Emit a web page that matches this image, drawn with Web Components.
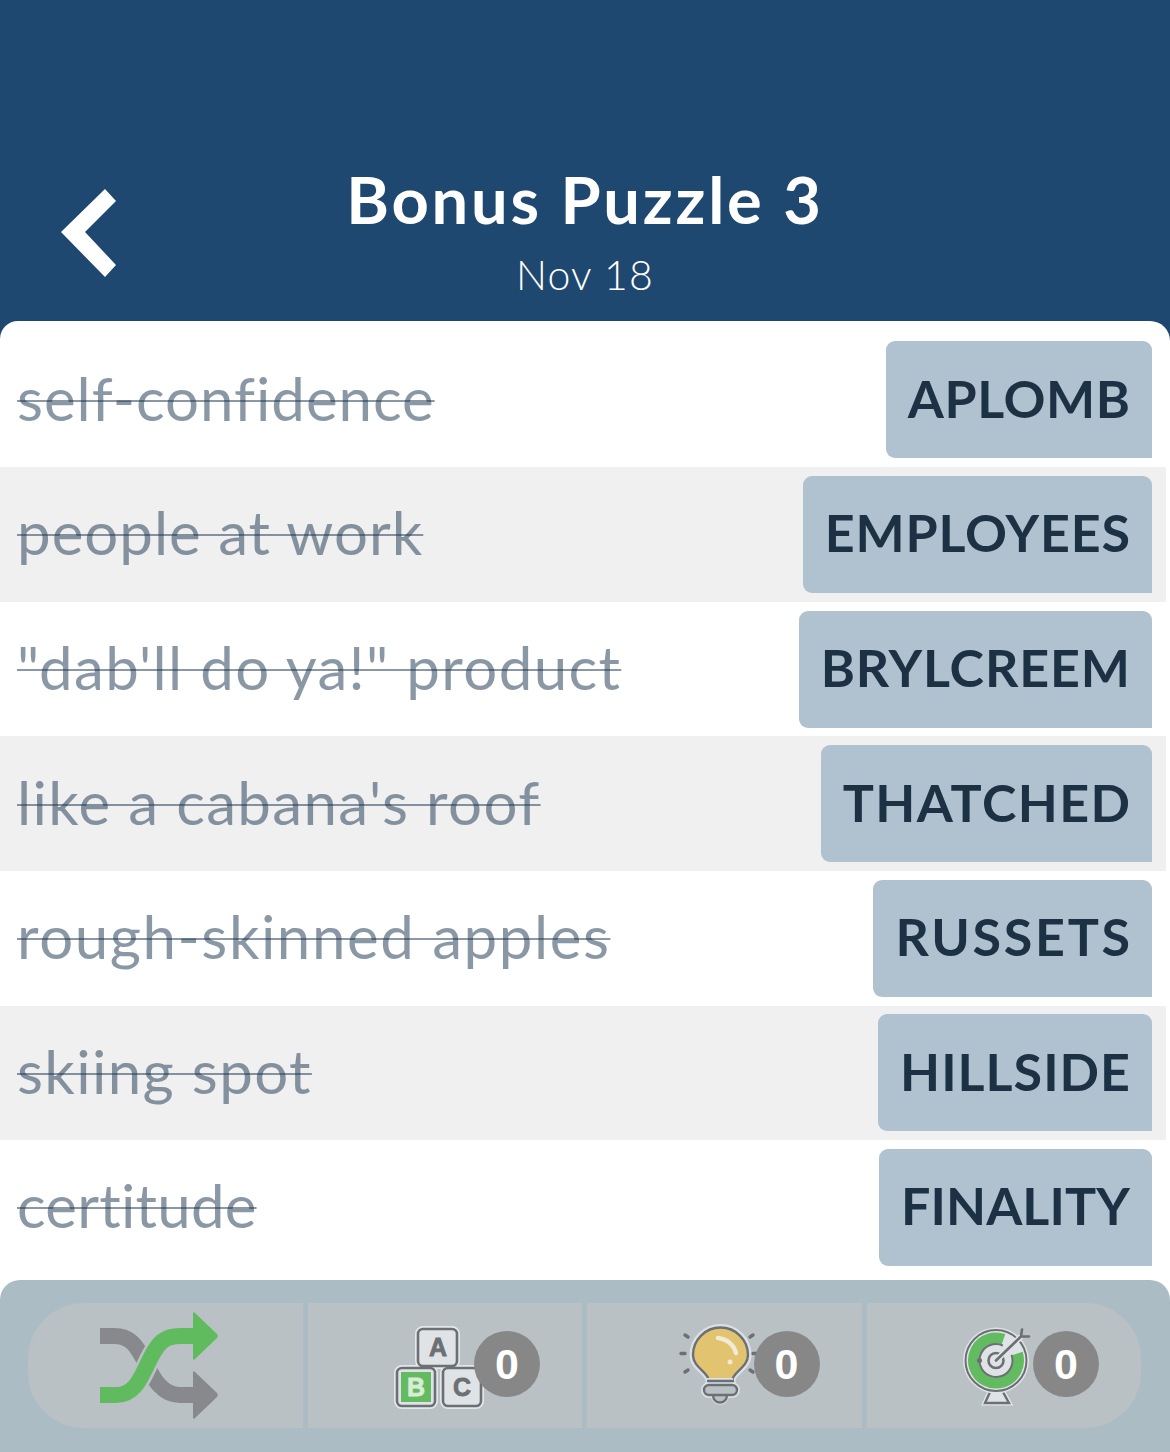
<!DOCTYPE html>
<html>
<head>
<meta charset="utf-8">
<title>Bonus Puzzle 3</title>
<style>
    html, body { margin: 0; padding: 0; background: #fff; }
    body { font-family: "Lato", "Noto Sans", sans-serif; }
</style>
</head>
<body>
<puzzle-page>
    <puzzle-header title="Bonus Puzzle 3" date="Nov 18"></puzzle-header>
    <clue-list>
        <!-- tracking per row makes up for the missing rounded font -->
        <clue-row answer="APLOMB" style="--clue-track:.95px;--tile-track:.55px">self-confidence</clue-row>
        <clue-row answer="EMPLOYEES" style="--clue-track:1px;--tile-track:.8px">people at work</clue-row>
        <clue-row answer="BRYLCREEM" style="--clue-track:1.35px;--tile-track:.9px">"dab'll do ya!" product</clue-row>
        <clue-row answer="THATCHED" style="--clue-track:1.37px;--tile-track:1.4px">like a cabana's roof</clue-row>
        <clue-row answer="RUSSETS" style="--clue-track:1.55px;--tile-track:2.7px">rough-skinned apples</clue-row>
        <clue-row answer="HILLSIDE" style="--clue-track:1.36px;--tile-track:1px">skiing spot</clue-row>
        <clue-row answer="FINALITY" style="--clue-track:.2px;--tile-track:.1px">certitude</clue-row>
    </clue-list>
    <tool-bar>
        <tool-seg><tool-icon name="shuffle"></tool-icon></tool-seg>
        <tool-seg count="0"><tool-icon name="blocks"></tool-icon></tool-seg>
        <tool-seg count="0"><tool-icon name="bulb"></tool-icon></tool-seg>
        <tool-seg count="0"><tool-icon name="target"></tool-icon></tool-seg>
    </tool-bar>
</puzzle-page>

<script>
(function puzzle(customElements){
    'use strict';

    const DARK = '#6c6f73';
    const PALE = '#dfe3e6';
    const GREEN = '#62bb60';

    const ICONS = {
        shuffle: `<svg width="125" height="111" viewBox="96 1310 125 111">
            <path d="M100 1336h14c16 0 22 9 30 24s16 35 36 35h16" fill="none" stroke="#87898d" stroke-width="16"/>
            <path d="M193 1373a1 1 0 0 1 2-1l22 21a3 3 0 0 1 0 4l-22 21a1 1 0 0 1-2-1z" fill="#87898d"/>
            <path d="M100 1395h16c20 0 26-20 34-36s14-23 30-23h16" fill="none" stroke="#b9c1c5" stroke-width="21"/>
            <path d="M100 1395h16c20 0 26-20 34-36s14-23 30-23h16" fill="none" stroke="#5fbb5e" stroke-width="16"/>
            <path d="M193 1314a1 1 0 0 1 2-1l22 21a3 3 0 0 1 0 4l-22 21a1 1 0 0 1-2-1z" fill="#5fbb5e"/>
        </svg>`,
        blocks: `<svg width="90" height="87" viewBox="395 1322 90 87" font-family="Liberation Sans, sans-serif" font-weight="700" font-size="25" text-anchor="middle">
            <g stroke="#e3e7ea" stroke-width="6" fill="${PALE}">
                <rect x="419" y="1329" width="39" height="37" rx="5"/>
                <rect x="398" y="1368" width="38" height="38" rx="5"/>
                <rect x="444" y="1368" width="38" height="38" rx="5"/>
            </g>
            <g stroke="${DARK}" stroke-width="2.6">
                <rect x="419" y="1329" width="39" height="37" rx="5" fill="${PALE}"/>
                <rect x="398" y="1368" width="38" height="38" rx="5" fill="${PALE}"/>
                <rect x="444" y="1368" width="38" height="38" rx="5" fill="${PALE}"/>
            </g>
            <rect x="402" y="1372" width="30" height="30" fill="${GREEN}"/>
            <text x="439" y="1356" fill="${DARK}" stroke="${DARK}" stroke-width=".8">A</text>
            <text x="417" y="1396" fill="#d8ecd6" stroke="#d8ecd6" stroke-width=".8">B</text>
            <text x="463" y="1396" fill="${DARK}" stroke="${DARK}" stroke-width=".8">C</text>
        </svg>`,
        bulb: `<svg width="90" height="87" viewBox="676 1322 90 87">
            <path d="M708 1381C708 1372 692 1368 692 1355a27.5 27.5 0 0 1 55 0C747 1368 731 1372 731 1381Z" fill="#e2c36f" stroke="#dbe0e4" stroke-width="7"/>
            <path d="M708 1381C708 1372 692 1368 692 1355a27.5 27.5 0 0 1 55 0C747 1368 731 1372 731 1381" fill="#e2c36f" stroke="${DARK}" stroke-width="2.4"/>
            <path d="M706 1381h26M708 1385a3 3 0 0 0 0 10h23a3 3 0 0 0 0-10zM713 1395c0 9 12 9 12 0" fill="${PALE}" stroke="#dbe0e4" stroke-width="6"/>
            <path d="M706 1381h27M708 1385a5 5 0 0 0 0 10h23a5 5 0 0 0 0-10zM712 1395c0 10 14 10 14 0" fill="#b9c1c5" stroke="${DARK}" stroke-width="2.4"/>
            <path d="M717 1338c9 1 16 7 18 15" fill="none" stroke="#f0ead6" stroke-width="4.5" stroke-linecap="round"/>
            <circle cx="729" cy="1362" r="2.5" fill="#f0ead6"/>
            <g stroke="${DARK}" stroke-width="3.4" stroke-linecap="round">
                <path d="M684 1335l3 2M680 1353.500h4M684 1372l3-2M749 1337l3-2M749 1370l3 2M752 1353.500h3"/>
            </g>
        </svg>`,
        target: `<svg width="71" height="87" viewBox="962 1322 71 87">
            <path d="M990 1392l-5 11h24l-6-11" fill="${PALE}" stroke="#e3e7ea" stroke-width="5"/>
            <path d="M990 1392l-5 11h24l-6-11" fill="${PALE}" stroke="${DARK}" stroke-width="2.4"/>
            <circle cx="996" cy="1360.500" r="33" fill="#dfe3e6"/>
            <circle cx="996" cy="1360.500" r="30.500" fill="none" stroke="${DARK}" stroke-width="2"/>
            <circle cx="996" cy="1360.500" r="22.500" fill="none" stroke="${GREEN}" stroke-width="11" stroke-dasharray="120 21" transform="rotate(-18 996 1360.500)"/>
            <circle cx="996" cy="1360.500" r="16.500" fill="none" stroke="${DARK}" stroke-width="2" stroke-dasharray="90 14" transform="rotate(-20 996 1360.500)"/>
            <circle cx="996" cy="1360.500" r="7.500" fill="none" stroke="${DARK}" stroke-width="2.600"/>
            <path d="M996 1360.500l25-24" stroke="${PALE}" stroke-width="6"/>
            <path d="M996 1360.500l25-24M1021 1336.500l1-7M1021 1336.500l8 0" fill="none" stroke="${DARK}" stroke-width="2.600" stroke-linecap="round"/>
            <circle cx="979.500" cy="1360.500" r="2.500" fill="${DARK}"/>
        </svg>`
    };

    class PuzzlePage extends HTMLElement {
        constructor(){
            super();
            this.attachShadow({mode: 'open'}).innerHTML = `
                <style>
                    :host { display: flex; flex-direction: column; width: 1170px; height: 1452px; overflow: hidden; background: #fff; }
                </style>
                <slot></slot>`;
        }
    }

    class PuzzleHeader extends HTMLElement {
        constructor(){
            super();
            this.attachShadow({mode: 'open'}).innerHTML = `
                <style>
                    :host { display: grid; grid-template-columns: 1fr auto 1fr; height: 321px; box-sizing: border-box; background: #1f4871; color: #fff; }
                    .back { padding: 189px 0 0 61px; }
                    .back svg { display: block; }
                    .mid { display: flex; flex-direction: column; align-items: center; padding-top: 160px; }
                    h1 { margin: 0; font: 700 65px/78px "Lato", "Noto Sans", sans-serif; letter-spacing: 2.8px; }
                    p { margin: 12px 0 0; font: 300 41px/50px "Lato", "Noto Sans", sans-serif; letter-spacing: 1.2px; }
                </style>
                <div class="back">
                    <svg width="56" height="89" viewBox="61 189 56 89"><polygon points="61,232 105,189 116,201 85,232 116,265 105,277" fill="#fff"/></svg>
                </div>
                <div class="mid">
                    <h1>${this.getAttribute('title')}</h1>
                    <p>${this.getAttribute('date')}</p>
                </div>
                <div></div>`;
        }
    }

    class ClueList extends HTMLElement {
        constructor(){
            super();
            this.attachShadow({mode: 'open'}).innerHTML = `
                <style>
                    :host { display: block; background: #1f4871; }
                    .sheet { display: flex; flex-direction: column; height: 959px; box-sizing: border-box; padding: 11.600px 4px 5.400px 0; background: #fff; border-radius: 18px 20px 0 0; }
                </style>
                <div class="sheet"><slot></slot></div>`;
        }
    }

    class ClueRow extends HTMLElement {
        constructor(){
            super();
            this.attachShadow({mode: 'open'}).innerHTML = `
                <style>
                    :host { display: flex; align-items: center; justify-content: space-between; height: 134.600px; box-sizing: border-box; padding: 0 14px 0 17px; flex: none; }
                    :host(:nth-child(even)) { background: #f0f0f0; }
                    .clue { margin-bottom: 4px; font: 400 60px/70px "Lato", "Noto Sans", sans-serif; letter-spacing: var(--clue-track, 1px); color: rgba(30,55,80,.52); text-decoration: line-through; text-decoration-thickness: 2px; white-space: nowrap; }
                </style>
                <span class="clue"><slot></slot></span>
                <answer-tile>${this.getAttribute('answer')}</answer-tile>`;
        }
    }

    class AnswerTile extends HTMLElement {
        constructor(){
            super();
            this.attachShadow({mode: 'open'}).innerHTML = `
                <style>
                    :host { display: flex; align-items: center; height: 117px; box-sizing: border-box; padding: 0 calc(22px - var(--tile-track, 0px)) 4px 22px; background: #b0c2cf; border-radius: 9px 9px 0 9px; color: #1c3144; font: 700 52px/60px "Lato", "Noto Sans", sans-serif; letter-spacing: var(--tile-track, 0px); white-space: nowrap; }
                </style>
                <slot></slot>`;
        }
    }

    class ToolBar extends HTMLElement {
        constructor(){
            super();
            this.attachShadow({mode: 'open'}).innerHTML = `
                <style>
                    :host { display: block; height: 172px; box-sizing: border-box; padding: 23px 29px 24px 28px; background: #acbcc5; border-radius: 20px 20px 0 0; }
                    .pill { display: grid; grid-template-columns: repeat(4, 1fr); gap: 5px; height: 100%; border-radius: 56px; overflow: hidden; }
                </style>
                <div class="pill"><slot></slot></div>`;
        }
    }

    class ToolSeg extends HTMLElement {
        constructor(){
            super();
            const count = this.getAttribute('count');
            this.attachShadow({mode: 'open'}).innerHTML = `
                <style>
                    :host { display: flex; align-items: center; justify-content: flex-end; padding-right: 42px; background: #b9c1c5; }
                    :host(.lead) { justify-content: flex-start; padding: 0 0 0 68px; }
                    .count { flex: none; width: 66px; height: 66px; margin-bottom: 3px; border-radius: 50%; background: #878787; color: #fff; font: 700 43px/66px "Liberation Sans", sans-serif; text-align: center; }
                </style>
                <slot></slot>
                ${count === null ? '' : `<span class="count">${count}</span>`}`;
            if(count === null) this.classList.add('lead');
        }
    }

    class ToolIcon extends HTMLElement {
        constructor(){
            super();
            const name = this.getAttribute('name');
            const overlap = {blocks: -10, bulb: -13}[name] || 0;
            this.attachShadow({mode: 'open'}).innerHTML = `
                <style>
                    :host { display: block; flex: none; margin-right: ${overlap}px; }
                    svg { display: block; }
                </style>
                ${ICONS[name]}`;
        }
    }

    customElements.define('puzzle-page', PuzzlePage);
    customElements.define('puzzle-header', PuzzleHeader);
    customElements.define('clue-list', ClueList);
    customElements.define('clue-row', ClueRow);
    customElements.define('answer-tile', AnswerTile);
    customElements.define('tool-bar', ToolBar);
    customElements.define('tool-seg', ToolSeg);
    customElements.define('tool-icon', ToolIcon);
})(window.customElements);
</script>
</body>
</html>
